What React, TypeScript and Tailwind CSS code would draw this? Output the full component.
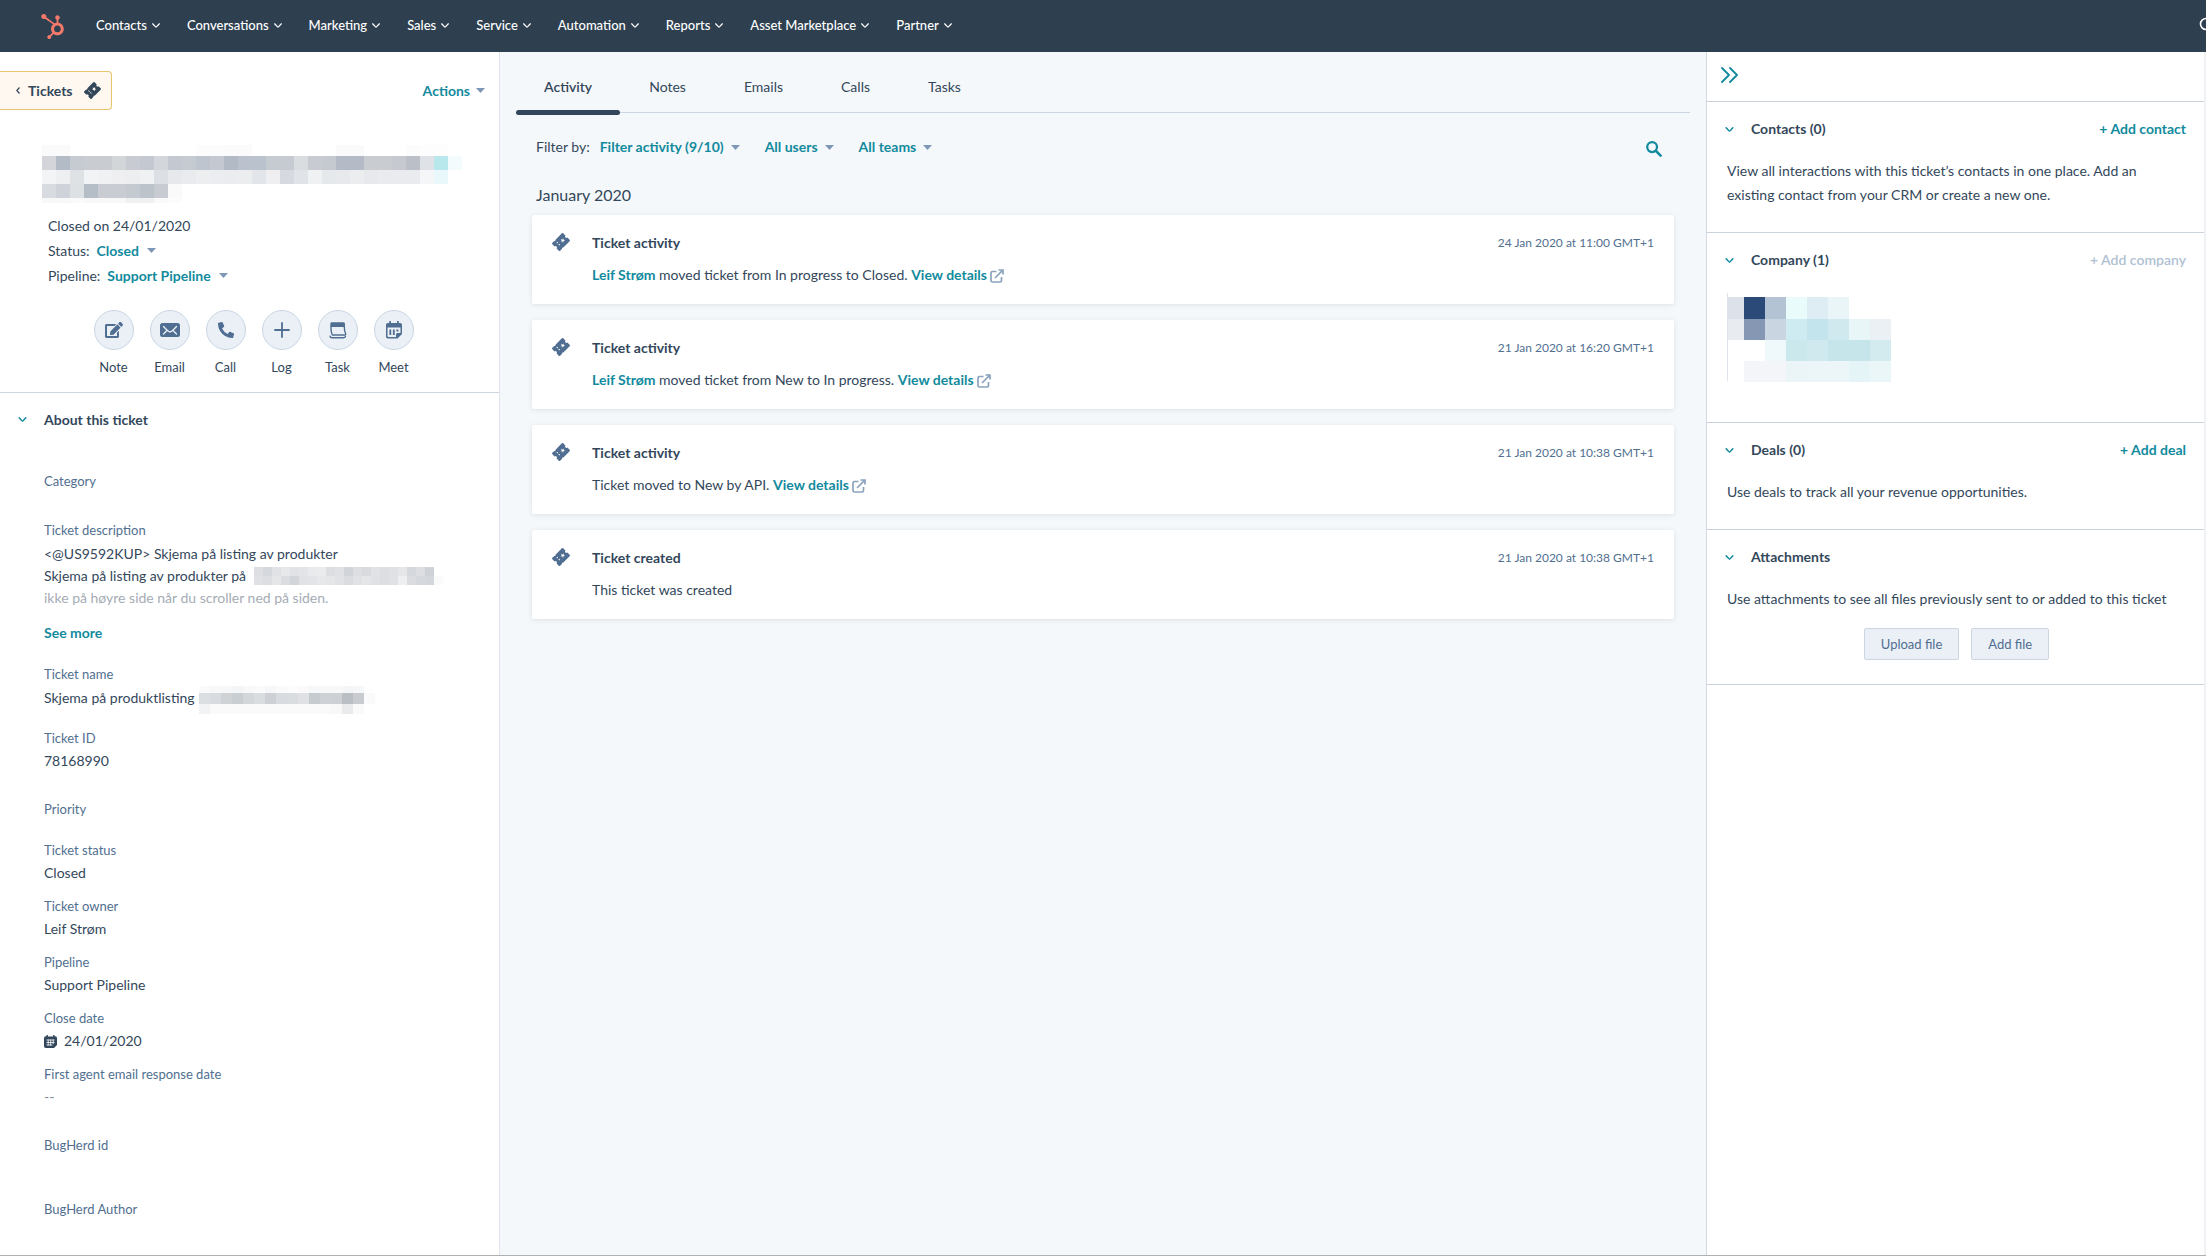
import type { ReactNode } from "react";
import { FaEdit, FaHubspot, FaPhoneAlt } from "react-icons/fa";

const NAV = [
  "Contacts",
  "Conversations",
  "Marketing",
  "Sales",
  "Service",
  "Automation",
  "Reports",
  "Asset Marketplace",
  "Partner",
];

const TABS = ["Activity", "Notes", "Emails", "Calls", "Tasks"];

/* ---------- Icons ---------- */

function Chevron({ className }: { className: string }) {
  return (
    <svg viewBox="0 0 10 6" className={className} fill="none" stroke="currentColor" strokeWidth="1.800" strokeLinecap="round" strokeLinejoin="round" aria-hidden="true">
      <path d="M1 1q3.500 4 4 4t4-4" />
    </svg>
  );
}

function Caret() {
  return (
    <svg viewBox="0 0 9 5" className="h-[5px] w-[9px] shrink-0 text-[#7c98b6]" fill="currentColor" aria-hidden="true">
      <path d="M0 0h9L4.500 5z" />
    </svg>
  );
}

function TicketIcon({ className }: { className: string }) {
  return (
    <svg viewBox="0 0 18 18" className={className} aria-hidden="true">
      <g transform="rotate(-45 9 9)">
        <path
          fill="currentColor"
          fillRule="evenodd"
          d="M2.300 3.500H5a1 1 0 0 0 1.800 0h8.900a1 1 0 0 1 1 1v3.200a1.300 1.300 0 0 0 0 2.600v3.200a1 1 0 0 1-1 1H6.800a1 1 0 0 0-1.800 0H2.300a1 1 0 0 1-1-1v-3.200a1.300 1.300 0 0 0 0-2.600V4.500a1 1 0 0 1 1-1z M11.300 6.800l-.6 1.500-1.600.1 1.200 1-.4 1.600 1.400-.9 1.400.9-.4-1.600 1.200-1-1.600-.1z M5.500 6v1.600h.9V6z M5.500 8.800v1.600h.9V8.800z"
        />
      </g>
    </svg>
  );
}

function SearchIcon({ className }: { className: string }) {
  return (
    <svg viewBox="0 0 17 17" className={className} fill="none" stroke="currentColor" aria-hidden="true">
      <circle cx="6.500" cy="6.500" r="5.200" strokeWidth="2.400" />
      <path d="M10.500 10.500l5 5" strokeWidth="2.800" strokeLinecap="round" />
    </svg>
  );
}

function ExternalIcon() {
  return (
    <svg viewBox="0 0 14 14" className="inline size-[14px] text-[#8ba3bd]" fill="none" stroke="currentColor" strokeWidth="1.700" aria-hidden="true">
      <path d="M6.500 2.500h-4a1.500 1.500 0 0 0-1.500 1.500v7.500a1.500 1.500 0 0 0 1.500 1.500H10a1.500 1.500 0 0 0 1.500-1.500V8" />
      <path d="M8.500 1H13v4.500M12.800 1.200L5 9" />
    </svg>
  );
}

function EnvelopeIcon() {
  return (
    <svg viewBox="0 0 20 14" className="h-[14px] w-5" aria-hidden="true">
      <rect width="20" height="14" rx="2.500" fill="currentColor" />
      <path d="M3.500 3.500Q8.500 9 10 9t6.500-5.500M3.500 11l3.200-3.200M16.500 11l-3.200-3.200" fill="none" stroke="#eaf0f6" strokeWidth="1.300" strokeLinecap="round" />
    </svg>
  );
}

function PlusIcon() {
  return (
    <svg viewBox="0 0 16 16" className="size-4" fill="none" stroke="currentColor" strokeWidth="1.800" strokeLinecap="round" aria-hidden="true">
      <path d="M8 1v14M1 8h14" />
    </svg>
  );
}

function TaskIcon() {
  return (
    <svg viewBox="0 0 18 17" className="h-[17px] w-[18px]" aria-hidden="true">
      <path d="M3 .3h11.500a1.500 1.500 0 0 1 1.500 1.500V5H1.300V1.800A1.500 1.500 0 0 1 3 .3z" fill="currentColor" />
      <path d="M2 5q0 6 1.500 8h12q1.300 0 1.200-1.200Q15.300 9 15.300 5M1 14.200q.3 1.600 2 1.600h11.500q1.500 0 2-1.200" fill="none" stroke="currentColor" strokeWidth="1.400" strokeLinecap="round" strokeLinejoin="round" />
    </svg>
  );
}

function MeetIcon() {
  return (
    <svg viewBox="0 0 16 18" className="h-[18px] w-4" aria-hidden="true">
      <path
        fill="currentColor"
        fillRule="evenodd"
        d="M3.200.8a.9.900 0 0 1 1.800 0V2h6V.8a.9.900 0 0 1 1.800 0V2h1.400A1.800 1.800 0 0 1 16 3.800V13l-4.500 4.500H1.800A1.800 1.800 0 0 1 0 15.700V3.800A1.800 1.800 0 0 1 1.800 2h1.400z M1.500 6.500v8A1.400 1.400 0 0 0 2.900 16H10v-2.500a1.500 1.500 0 0 1 1.500-1.500h3V6.500z"
      />
      <path d="M4.300 8.500v5.500M7.800 8.500v5.500" stroke="currentColor" strokeWidth="1.800" />
      <path d="M11.400 8.500v2" stroke="currentColor" strokeWidth="2" />
    </svg>
  );
}

function DateIcon() {
  return (
    <svg viewBox="0 0 13 13" className="size-[13px] shrink-0" aria-hidden="true">
      <path fill="currentColor" d="M2.500 0h1.400v1.400h5.200V0h1.400v1.400A2 2 0 0 1 13 3.300V10l-3 3H1.800A1.800 1.800 0 0 1 0 11.200V3.200a2 2 0 0 1 2.500-1.800z" />
      <path d="M2.500 5h8M2.500 7.500h8M2.500 10h6M4.200 4.500v6M6.700 4.500v6M9.200 4.500v4.500" stroke="#fff" strokeWidth=".8" />
    </svg>
  );
}

/* ---------- Redaction mosaics ---------- */

type MosaicRow = { h: number; cells: string };

function Mosaic({ rows, cell, width, className }: { rows: MosaicRow[]; cell: number; width: number; className: string }) {
  let y = 0;
  const total = rows.reduce((sum, r) => sum + r.h, 0);
  return (
    <svg viewBox={`0 0 ${width} ${total}`} className={className} shapeRendering="crispEdges" aria-hidden="true">
      {rows.map((row, ri) => {
        const top = y;
        y += row.h;
        return row.cells.split(" ").map((c, i) =>
          c === "-" ? null : <rect key={`${ri}-${i}`} x={i * cell} y={top} width={cell} height={row.h} fill={`#${c}`} />
        );
      })}
    </svg>
  );
}

const TITLE_ROWS: MosaicRow[] = [
  { h: 11, cells: "fafafb fafafb - - - - - - - - - fcfcfd fcfcfd fbfbfc fbfbfc - - - - - - fafafb fafafb - - - fcfcfd fdfdfe fdfdfe -" },
  { h: 14, cells: "d3d5db b3bbc6 c6cbd1 c9cdd2 c9cdd2 d2d6d8 c8ccd2 c3c8d1 d3d6da c4c9d1 c6cbd2 bfc5cf c4c9d1 b2bac6 bbc2cd bac2cd c6cbd2 c6cbd2 dadde0 c8ccd2 c5cad1 b5bbc6 b5bbc6 c9cdd2 c9cdd2 c6cad0 bbbfc8 dfe2e6 b8e8ec f3fbfd" },
  { h: 14, cells: "f3f4f6 eeeff1 dfe2e5 f2f3f5 f0f1f3 efeff2 eceef0 f0f1f3 dcdfe3 e6e8eb e9ebee eceef0 ebedf0 eaecef ebedef e2e5e9 efeff1 d6d9df e0e3e7 f0f1f3 e6e9ec e7e9ec ebedef e7e9ec e9ebee e9ebee e9ebee f5f6f8 e9f8fa" },
  { h: 14, cells: "d8dbdf cfd3d9 dde1e4 b5bec7 c9cdd3 c9cdd3 c5cad1 bdc3cb c8ccd2 fafafb" },
  { h: 5, cells: "f8f8f9 f8f8f9 fafafb f8f8f9 f8f8f9 f8f8f9 eff0f2 eff0f2 fafafb fcfcfd" },
];

const DESCRIPTION_ROWS: MosaicRow[] = [
  { h: 9, cells: "dcdee2 d5d8dc e0e2e5 e6e8ea e0e2e5 e2e4e7 e8eaec eaebed dcdee2 dfe1e4 d1d4d9 dcdee2 d8dade e0e2e5 dcdee2 dfe1e4 e4e6e8 d5d8dc dcdee2 cfd3d8" },
  { h: 9, cells: "dfe1e4 dcdee2 e4e6e8 dadce0 d2d5da e0e2e5 e2e4e7 e6e8ea e4e6e8 e0e2e5 dadce0 e0e2e5 e4e6e8 dfe1e4 dcdee2 dfe1e4 eeeff1 dadce0 d5d8dc d3d6da fafafb" },
];

const NAME_ROWS: MosaicRow[] = [
  { h: 7, cells: "fafafb f8f8f9 f6f7f8 f4f5f6 f8f8f9 fafafb f6f7f8 fafafb fcfcfd fafafb f6f7f8 f8f8f9 f8f8f9 f4f5f6 f6f7f8" },
  { h: 11, cells: "dcdfe2 d8dbdf cfd3d6 c9ced2 d3d7da dadde0 cdd1d5 d8dbdf dadde0 dfe1e4 c6cbcf ced2d6 cdd1d5 b9bfc5 c8ccd1 fafafb" },
  { h: 10, cells: "f2f3f4 fafafb fafafb fafafb fafafb fafafb fafafb fafafb fafafb fafafb fafafb fafafb f8f8f9 e9ebed fafafb" },
];

const COMPANY_ROWS: MosaicRow[] = [
  { h: 22, cells: "dde2ea 2b4a77 b3c3d3 e9fbfb ddedf3 e9f5f6" },
  { h: 21, cells: "e8ebf0 8597b2 c9d6e1 cdebf0 c3e4ec cfe9ee e9f6f8 ebf0f4" },
  { h: 21, cells: "- - eff8fa cbe9ed d0e9ee c6e5eb c6e5eb d3eaef" },
  { h: 21, cells: "- f4f5f8 f4f5f8 ebf5f8 ecf5f8 ecf5f8 e5f4f6 eaf6f8" },
];

/* ---------- Left panel ---------- */

const ACTIONS: { label: string; icon: ReactNode }[] = [
  { label: "Note", icon: <FaEdit className="size-[18px]" /> },
  { label: "Email", icon: <EnvelopeIcon /> },
  { label: "Call", icon: <FaPhoneAlt className="size-4" /> },
  { label: "Log", icon: <PlusIcon /> },
  { label: "Task", icon: <TaskIcon /> },
  { label: "Meet", icon: <MeetIcon /> },
];

function Field({ label, className, children }: { label: string; className: string; children?: ReactNode }) {
  return (
    <div className={className}>
      <dt className="text-[13px] leading-[22px] text-[#516f90]">{label}</dt>
      {children && <dd className="leading-6">{children}</dd>}
    </div>
  );
}

function LeftPanel() {
  return (
    <aside className="w-[500px] shrink-0 border-r border-[#dfe3eb] bg-white">
      <div className="mt-[19px] flex h-[39px] items-center justify-between pr-[14px]">
        <a href="#tickets" className="flex h-full items-center rounded-r-sm border border-l-0 border-[#e8c46e] bg-[#fef8f0] pr-[10px] pl-4 font-bold">
          <svg viewBox="0 0 4 7" className="mr-2 h-[7px] w-1" fill="none" stroke="currentColor" strokeWidth="1.200" aria-hidden="true">
            <path d="M3.500.5L.8 3.500l2.700 3" />
          </svg>
          Tickets
          <TicketIcon className="ml-[11px] size-[17px]" />
        </a>
        <button type="button" className="flex items-center gap-[6px] font-bold text-[#128a9e]">
          Actions
          <Caret />
        </button>
      </div>

      <div className="mt-[35px] ml-[42px]">
        <Mosaic rows={TITLE_ROWS} cell={14} width={420} className="h-[58px] w-[420px]" />
      </div>

      <div className="mt-[10px] ml-12 leading-[25px]">
        <p>Closed on 24/01/2020</p>
        <p className="flex items-center">
          Status:
          <button type="button" className="ml-[7px] flex items-center gap-2 font-bold text-[#128a9e]">
            Closed
            <Caret />
          </button>
        </p>
        <p className="flex items-center">
          Pipeline:
          <button type="button" className="ml-[7px] flex items-center gap-2 font-bold text-[#128a9e]">
            Support Pipeline
            <Caret />
          </button>
        </p>
      </div>

      <div className="mt-[22px] flex justify-center gap-4 border-b border-[#cbd6e2] pb-[15px] pl-2">
        {ACTIONS.map((a) => (
          <button key={a.label} type="button" className="flex w-10 flex-col items-center gap-[7px] text-[13px] leading-5">
            <span className="flex size-10 items-center justify-center rounded-full border border-[#cbd6e2] bg-[#eaf0f6] text-[#506e91]">
              {a.icon}
            </span>
            {a.label}
          </button>
        ))}
      </div>

      <h2 className="flex h-[53px] items-center font-bold">
        <button type="button" className="flex items-center">
          <Chevron className="mr-[17px] ml-[18px] h-[5px] w-[9px] text-[#128a9e]" />
          About this ticket
        </button>
      </h2>

      <dl className="mt-6 ml-11">
        <Field label="Category" className="h-[49px]" />
        <div className="h-36">
          <dt className="text-[13px] leading-[22px] text-[#516f90]">Ticket description</dt>
          <dd className="mt-[2px] leading-[22px]">
            <p>&lt;@US9592KUP&gt; Skjema på listing av produkter</p>
            <p className="flex items-center gap-2">
              Skjema på listing av produkter på
              <Mosaic rows={DESCRIPTION_ROWS} cell={9} width={189} className="h-[18px] w-[189px]" />
            </p>
            <p className="text-[#a5acb5]">ikke på høyre side når du scroller ned på siden.</p>
            <button type="button" className="mt-[13px] font-bold text-[#128a9e]">
              See more
            </button>
          </dd>
        </div>
        <Field label="Ticket name" className="h-16">
          <span className="flex h-[26px] items-center gap-1">
            Skjema på produktlisting
            <Mosaic rows={NAME_ROWS} cell={11} width={176} className="mt-1 h-7 w-44" />
          </span>
        </Field>
        <Field label="Ticket ID" className="h-[71px]">
          78168990
        </Field>
        <Field label="Priority" className="h-[41px]" />
        <Field label="Ticket status" className="h-14">
          Closed
        </Field>
        <Field label="Ticket owner" className="h-14">
          Leif Strøm
        </Field>
        <Field label="Pipeline" className="h-14">
          Support Pipeline
        </Field>
        <Field label="Close date" className="h-14">
          <span className="flex items-center gap-[7px]">
            <DateIcon />
            24/01/2020
          </span>
        </Field>
        <Field label="First agent email response date" className="h-[71px]">
          <span className="text-[#7c8a9a]">--</span>
        </Field>
        <Field label="BugHerd id" className="h-16" />
        <Field label="BugHerd Author" className="h-[49px]" />
      </dl>
    </aside>
  );
}

/* ---------- Timeline ---------- */

const ITEMS: { title: string; date: string; who?: string; text: string; details: boolean }[] = [
  { title: "Ticket activity", date: "24 Jan 2020 at 11:00 GMT+1", who: "Leif Strøm", text: "moved ticket from In progress to Closed.", details: true },
  { title: "Ticket activity", date: "21 Jan 2020 at 16:20 GMT+1", who: "Leif Strøm", text: "moved ticket from New to In progress.", details: true },
  { title: "Ticket activity", date: "21 Jan 2020 at 10:38 GMT+1", text: "Ticket moved to New by API.", details: true },
  { title: "Ticket created", date: "21 Jan 2020 at 10:38 GMT+1", text: "This ticket was created", details: false },
];

function FilterButton({ children }: { children: ReactNode }) {
  return (
    <button type="button" className="flex items-center gap-[7px] font-bold text-[#128a9e]">
      {children}
      <Caret />
    </button>
  );
}

function Timeline() {
  return (
    <main className="min-w-0 flex-1 bg-[#f5f8fa] px-4 pt-[13px]">
      <nav className="flex h-12 border-b border-[#cbd6e2]" aria-label="Activity types">
        {TABS.map((tab, i) =>
          i === 0 ? (
            <a key={tab} href="#activity" aria-current="page" className="flex h-[50px] flex-col px-7 font-semibold leading-[44px]">
              {tab}
              <span className="-mx-7 mt-px h-[5px] shrink-0 rounded-sm bg-[#33475b]" />
            </a>
          ) : (
            <a key={tab} href={`#${tab.toLowerCase()}`} className="px-[29px] leading-[44px]">
              {tab}
            </a>
          )
        )}
      </nav>

      <div className="mt-[22px] flex h-6 items-center pr-5 pl-5">
        <span className="mr-[10px]">Filter by:</span>
        <div className="flex flex-1 gap-[25px]">
          <FilterButton>Filter activity (9/10)</FilterButton>
          <FilterButton>All users</FilterButton>
          <FilterButton>All teams</FilterButton>
        </div>
        <button type="button" aria-label="Search activity" className="mr-2 pt-1 text-[#128a9e]">
          <SearchIcon className="size-4" />
        </button>
      </div>

      <h2 className="mt-6 ml-5 text-base leading-6">January 2020</h2>

      <div className="mt-2 mr-4 ml-4 flex flex-col gap-4">
        {ITEMS.map((item) => (
          <article key={item.date + item.title + item.text} className="flex rounded-xs bg-white pt-4 pr-5 pb-[17px] pl-5 shadow-[0_1px_5px_rgba(45,62,80,0.12)]">
            <TicketIcon className="mt-[2px] size-[18px] shrink-0 text-[#506e91]" />
            <div className="ml-[22px] flex-1">
              <div className="flex items-center justify-between leading-6">
                <h3 className="font-bold">{item.title}</h3>
                <time className="text-xs text-[#516f90]">{item.date}</time>
              </div>
              <p className="mt-2 leading-6">
                {item.who && (
                  <a href="#owner" className="font-bold text-[#128a9e]">
                    {item.who}
                  </a>
                )}{" "}
                {item.text}{" "}
                {item.details && (
                  <a href="#details" className="font-bold text-[#128a9e]">
                    View details <ExternalIcon />
                  </a>
                )}
              </p>
            </div>
          </article>
        ))}
      </div>
    </main>
  );
}

/* ---------- Right panel ---------- */

function Section({ title, action, muted, className, children }: { title: string; action?: string; muted?: boolean; className: string; children: ReactNode }) {
  return (
    <section className={className}>
      <div className="flex h-6 items-center justify-between">
        <h2 className="font-bold">
          <button type="button" className="flex items-center">
            <Chevron className="mr-[17px] ml-[-2px] h-[5px] w-[9px] text-[#128a9e]" />
            {title}
          </button>
        </h2>
        {action && (
          <button type="button" disabled={muted} className={muted ? "font-semibold text-[#b0c1d4]" : "font-bold text-[#128a9e]"}>
            {action}
          </button>
        )}
      </div>
      {children}
    </section>
  );
}

function RightPanel() {
  return (
    <aside className="w-[500px] shrink-0 border-r-2 border-l border-r-[#f0f2f5] border-l-[#d3d9e0] bg-white">
      <div className="flex h-[50px] items-center border-b border-[#cbd3dc] pl-[14px]">
        <button type="button" aria-label="Collapse panel" className="text-[#128a9e]">
          <svg viewBox="0 0 17 16" className="mb-1 h-4 w-[17px]" fill="none" stroke="currentColor" strokeWidth="1.800" strokeLinecap="round" strokeLinejoin="round" aria-hidden="true">
            <path d="M1 1l7 7-7 7M9 1l7 7-7 7" />
          </svg>
        </button>
      </div>

      <Section title="Contacts (0)" action="+ Add contact" className="border-b border-[#cbd3dc] pt-[15px] pr-[18px] pb-[25px] pl-5">
        <p className="mt-[18px] leading-6">
          View all interactions with this ticket’s contacts in one place. Add an existing contact from your CRM or create a new one.
        </p>
      </Section>

      <Section title="Company (1)" action="+ Add company" muted className="border-b border-[#cbd3dc] pt-[15px] pr-[18px] pb-10 pl-5">
        <div className="mt-5 rounded-xs border-l border-[#dfe3eb] pt-[5px]">
          <div className="overflow-hidden">
            <Mosaic rows={COMPANY_ROWS} cell={21} width={168} className="-ml-[5px] h-[85px] w-[168px]" />
          </div>
        </div>
      </Section>

      <Section title="Deals (0)" action="+ Add deal" className="border-b border-[#cbd3dc] pt-[15px] pr-[18px] pb-[25px] pl-5">
        <p className="mt-[18px] leading-6">Use deals to track all your revenue opportunities.</p>
      </Section>

      <Section title="Attachments" className="border-b border-[#cbd3dc] pt-[15px] pr-[18px] pb-6 pl-5">
        <p className="mt-[18px] leading-6">Use attachments to see all files previously sent to or added to this ticket</p>
        <div className="mt-[17px] flex justify-center gap-3">
          <button type="button" className="h-8 rounded-xs border border-[#cbd6e2] bg-[#eaf0f6] px-4 text-[13px] text-[#506e91]">
            Upload file
          </button>
          <button type="button" className="h-8 rounded-xs border border-[#cbd6e2] bg-[#eaf0f6] px-4 text-[13px] text-[#506e91]">
            Add file
          </button>
        </div>
      </Section>
    </aside>
  );
}

export default function App() {
  return (
    <div className="flex min-h-screen flex-col overflow-hidden border-b border-[#b0b0b0] bg-white font-['Lato',sans-serif] text-sm text-[#33475b]">
      <header className="flex h-[52px] shrink-0 items-center bg-[#2e3f50] pl-10 text-[13px] text-white">
        <a href="#home" aria-label="HubSpot home" className="mr-[31px] text-[#f3796a]">
          <FaHubspot className="size-[25px]" />
        </a>
        <nav className="flex gap-[27px] pb-[2px]" aria-label="Main">
          {NAV.map((label) => (
            <button key={label} type="button" className="flex items-center gap-[5px] font-medium">
              {label}
              <Chevron className="h-[5px] w-2" />
            </button>
          ))}
        </nav>
        <button type="button" aria-label="Search" className="ml-auto w-[7px] overflow-hidden pb-1">
          <svg viewBox="0 0 14 14" className="size-[14px] max-w-none" fill="none" stroke="currentColor" strokeWidth="1.600" aria-hidden="true">
            <circle cx="7" cy="7" r="5.500" />
            <path d="M11 11l3 3" />
          </svg>
        </button>
      </header>
      <div className="flex flex-1">
        <LeftPanel />
        <Timeline />
        <RightPanel />
      </div>
    </div>
  );
}
